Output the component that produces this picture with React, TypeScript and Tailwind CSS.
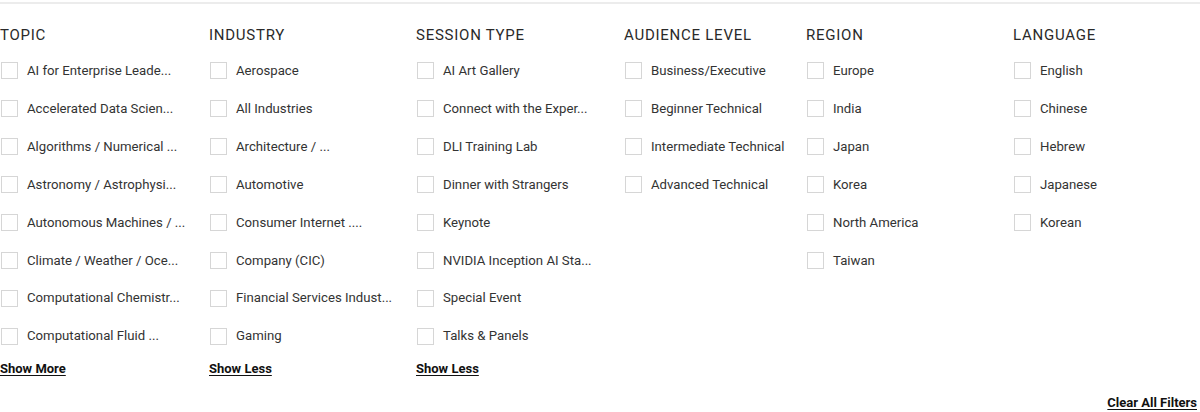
const columns: { title: string; width: string; items: string[]; toggle?: string }[] = [
  {
    title: "TOPIC",
    width: "w-[209px]",
    items: [
      "AI for Enterprise Leade...",
      "Accelerated Data Scien...",
      "Algorithms / Numerical ...",
      "Astronomy / Astrophysi...",
      "Autonomous Machines / ...",
      "Climate / Weather / Oce...",
      "Computational Chemistr...",
      "Computational Fluid ...",
    ],
    toggle: "Show More",
  },
  {
    title: "INDUSTRY",
    width: "w-[207px]",
    items: [
      "Aerospace",
      "All Industries",
      "Architecture / ...",
      "Automotive",
      "Consumer Internet ....",
      "Company (CIC)",
      "Financial Services Indust...",
      "Gaming",
    ],
    toggle: "Show Less",
  },
  {
    title: "SESSION TYPE",
    width: "w-[208px]",
    items: [
      "AI Art Gallery",
      "Connect with the Exper...",
      "DLI Training Lab",
      "Dinner with Strangers",
      "Keynote",
      "NVIDIA Inception AI Sta...",
      "Special Event",
      "Talks & Panels",
    ],
    toggle: "Show Less",
  },
  {
    title: "AUDIENCE LEVEL",
    width: "w-[182px]",
    items: ["Business/Executive", "Beginner Technical", "Intermediate Technical", "Advanced Technical"],
  },
  {
    title: "REGION",
    width: "w-[207px]",
    items: ["Europe", "India", "Japan", "Korea", "North America", "Taiwan"],
  },
  {
    title: "LANGUAGE",
    width: "w-[187px]",
    items: ["English", "Chinese", "Hebrew", "Japanese", "Korean"],
  },
];

const App = () => {
  return (
    <div className="w-[1200px] h-[412px] bg-white font-['Roboto',sans-serif] text-[#1a1a1a]">
      <div className="border-t-2 border-[#ececec] mt-[2px]" />
      <div className="flex pt-[18px]">
        {columns.map((col) => (
          <div key={col.title} className={`flex flex-col ${col.width}`}>
            <div className="h-[26px] text-[15px] tracking-[0.05em] text-[#2a2a2a] leading-[26px]">{col.title}</div>
            <div className="flex flex-col pt-[4px]">
              {col.items.map((item) => (
                <div key={item} className="flex items-center h-[37.9px] gap-[9px]">
                  <span className="ml-[1px] w-[17px] h-[17px] border border-[#d6d6d6] bg-white shrink-0" />
                  <span className="text-[13.2px] text-[#333] whitespace-nowrap">{item}</span>
                </div>
              ))}
            </div>
            {col.toggle && (
              <a className="mt-[4px] text-[13px] font-bold underline underline-offset-2 text-[#111] cursor-pointer">
                {col.toggle}
              </a>
            )}
          </div>
        ))}
      </div>
      <div className="flex justify-end pr-[3px] mt-[14px]">
        <a className="text-[13px] font-bold underline underline-offset-2 text-[#111] cursor-pointer">
          Clear All Filters
        </a>
      </div>
    </div>
  );
};

export default App;
